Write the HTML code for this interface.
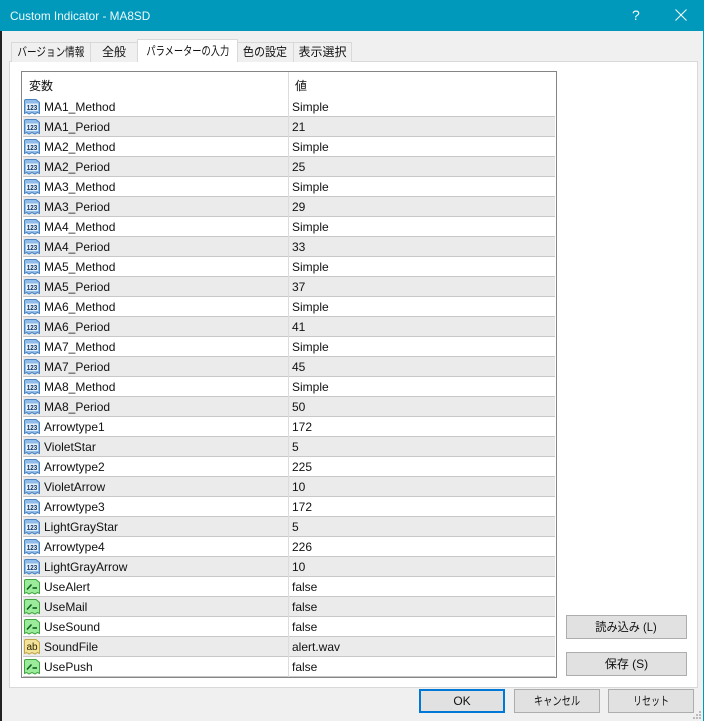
<!DOCTYPE html>
<html><head><meta charset="utf-8"><style>
*{box-sizing:border-box}
html,body{margin:0;padding:0;width:704px;height:721px;overflow:hidden;background:#222}
body{font-family:"Liberation Sans","Noto Sans CJK JP",sans-serif;font-size:12px;color:#111;position:relative}
.a{position:absolute}
#win{left:2px;top:0;width:702px;height:721px;background:#f0f0f0;border-right:1px solid #0099bc}
#title{left:0;top:0;width:704px;height:31px;background:#0099bc;color:#eef9fb;font-size:11.8px;line-height:32px;padding-left:10px}
.tab{position:absolute;top:42px;height:20px;background:#f0f0f0;border:1px solid #d9d9d9;border-bottom:0;text-align:center;line-height:19px;white-space:nowrap}
.k{display:inline-block;margin:0 -20px}
#panel{left:9px;top:61px;width:689px;height:627px;background:#fff;border:1px solid #d9d9d9}
#act{top:39px;height:23px;background:#fff;line-height:22px;z-index:2}
#list{left:21px;top:71px;width:536px;height:607px;background:#fff;border:1px solid #858585;z-index:3;overflow:hidden}
.h{position:absolute;top:7px;line-height:14px}
#vs{position:absolute;left:266px;top:0;width:1px;height:606px;background:#dcdcdc}
.r{position:absolute;left:1px;width:532px;height:20px;border-bottom:1px solid #c8c8c8;line-height:19px;background:#fff}
.r.g{background:#ebebeb}
.r svg{position:absolute;left:0;top:1px;width:18px;height:17px}
.r b{position:absolute;left:21px;top:1px;font-weight:normal;white-space:nowrap}
.r i{position:absolute;left:269px;top:1px;font-style:normal;white-space:nowrap}
.btn{position:absolute;height:24px;background:#e1e1e1;border:1px solid #adadad;text-align:center;line-height:22px;white-space:nowrap;z-index:3}
</style></head><body>
<svg width="0" height="0" style="position:absolute"><defs>
<symbol id="n" viewBox="0 0 18 17"><path d="M1.500 3Q1.500 1.500 3 1.500H13L16.500 4.500V15.500L14.500 14.500L12 16L9 14.500L6 16L3.500 14.500L1.500 15.500Z" fill="#8fbce8" stroke="#4a82bd"/><rect x="3" y="5.500" width="12" height="7.500" fill="#e3eef9"/><text x="9" y="11.800" font-size="7" font-weight="bold" text-anchor="middle" fill="#123a66" font-family="Liberation Sans" textLength="10.500" lengthAdjust="spacingAndGlyphs">123</text></symbol>
<symbol id="b" viewBox="0 0 18 17"><path d="M1.500 3Q1.500 1.500 3 1.500H13L16.500 4.500V15.500L14.500 14.500L12 16L9 14.500L6 16L3.500 14.500L1.500 15.500Z" fill="#9ceb9c" stroke="#3fa33f"/><path d="M4 11.500L8.500 6.500M9.500 10H14" stroke="#0a5a1a" stroke-width="1.500" fill="none"/></symbol>
<symbol id="s" viewBox="0 0 18 17"><path d="M1.500 3Q1.500 1.500 3 1.500H13L16.500 4.500V15.500L14.500 14.500L12 16L9 14.500L6 16L3.500 14.500L1.500 15.500Z" fill="#f3e29a" stroke="#c0a545"/><text x="9" y="12" font-size="10" text-anchor="middle" fill="#2e2600" font-family="Liberation Sans">ab</text></symbol>
</defs></svg>
<div class="a" id="win"></div>
<div class="a" id="title">Custom Indicator - MA8SD</div>
<div class="a" style="left:632px;top:6px;color:#fff;font-size:14px;line-height:18px">?</div>
<svg class="a" style="left:675px;top:9px" width="12" height="12"><path d="M.5 .5L11.500 11.500M11.500 .5L.5 11.500" stroke="#fff" fill="none"/></svg>
<div class="a" id="panel"></div>
<div class="tab" style="left:11px;width:80px"><span class="k" style="transform:scaleX(.8)">バージョン情報</span></div>
<div class="tab" style="left:90px;width:48px">全般</div>
<div class="tab" id="act" style="left:137px;width:101px"><span class="k" style="transform:scaleX(.77)">パラメーターの入力</span></div>
<div class="tab" style="left:237px;width:57px"><span class="k" style="transform:scaleX(.92)">色の設定</span></div>
<div class="tab" style="left:293px;width:59px">表示選択</div>
<div class="a" id="list">
<div class="h" style="left:7px">変数</div><div class="h" style="left:273px">値</div>
<div class="r" style="top:25px"><svg><use href="#n"/></svg><b>MA1_Method</b><i>Simple</i></div>
<div class="r g" style="top:45px"><svg><use href="#n"/></svg><b>MA1_Period</b><i>21</i></div>
<div class="r" style="top:65px"><svg><use href="#n"/></svg><b>MA2_Method</b><i>Simple</i></div>
<div class="r g" style="top:85px"><svg><use href="#n"/></svg><b>MA2_Period</b><i>25</i></div>
<div class="r" style="top:105px"><svg><use href="#n"/></svg><b>MA3_Method</b><i>Simple</i></div>
<div class="r g" style="top:125px"><svg><use href="#n"/></svg><b>MA3_Period</b><i>29</i></div>
<div class="r" style="top:145px"><svg><use href="#n"/></svg><b>MA4_Method</b><i>Simple</i></div>
<div class="r g" style="top:165px"><svg><use href="#n"/></svg><b>MA4_Period</b><i>33</i></div>
<div class="r" style="top:185px"><svg><use href="#n"/></svg><b>MA5_Method</b><i>Simple</i></div>
<div class="r g" style="top:205px"><svg><use href="#n"/></svg><b>MA5_Period</b><i>37</i></div>
<div class="r" style="top:225px"><svg><use href="#n"/></svg><b>MA6_Method</b><i>Simple</i></div>
<div class="r g" style="top:245px"><svg><use href="#n"/></svg><b>MA6_Period</b><i>41</i></div>
<div class="r" style="top:265px"><svg><use href="#n"/></svg><b>MA7_Method</b><i>Simple</i></div>
<div class="r g" style="top:285px"><svg><use href="#n"/></svg><b>MA7_Period</b><i>45</i></div>
<div class="r" style="top:305px"><svg><use href="#n"/></svg><b>MA8_Method</b><i>Simple</i></div>
<div class="r g" style="top:325px"><svg><use href="#n"/></svg><b>MA8_Period</b><i>50</i></div>
<div class="r" style="top:345px"><svg><use href="#n"/></svg><b>Arrowtype1</b><i>172</i></div>
<div class="r g" style="top:365px"><svg><use href="#n"/></svg><b>VioletStar</b><i>5</i></div>
<div class="r" style="top:385px"><svg><use href="#n"/></svg><b>Arrowtype2</b><i>225</i></div>
<div class="r g" style="top:405px"><svg><use href="#n"/></svg><b>VioletArrow</b><i>10</i></div>
<div class="r" style="top:425px"><svg><use href="#n"/></svg><b>Arrowtype3</b><i>172</i></div>
<div class="r g" style="top:445px"><svg><use href="#n"/></svg><b>LightGrayStar</b><i>5</i></div>
<div class="r" style="top:465px"><svg><use href="#n"/></svg><b>Arrowtype4</b><i>226</i></div>
<div class="r g" style="top:485px"><svg><use href="#n"/></svg><b>LightGrayArrow</b><i>10</i></div>
<div class="r" style="top:505px"><svg><use href="#b"/></svg><b>UseAlert</b><i>false</i></div>
<div class="r g" style="top:525px"><svg><use href="#b"/></svg><b>UseMail</b><i>false</i></div>
<div class="r" style="top:545px"><svg><use href="#b"/></svg><b>UseSound</b><i>false</i></div>
<div class="r g" style="top:565px"><svg><use href="#s"/></svg><b>SoundFile</b><i>alert.wav</i></div>
<div class="r" style="top:585px"><svg><use href="#b"/></svg><b>UsePush</b><i>false</i></div>
<div id="vs"></div>
</div>
<div class="btn" style="left:566px;top:615px;width:121px"><span class="k" style="transform:scaleX(.93)">読み込み (L)</span></div>
<div class="btn" style="left:566px;top:652px;width:121px">保存 (S)</div>
<div class="btn" style="left:419px;top:689px;width:86px;border:2px solid #0078d7;line-height:20px">OK</div>
<div class="btn" style="left:514px;top:689px;width:86px"><span class="k" style="transform:scaleX(.77)">キャンセル</span></div>
<div class="btn" style="left:608px;top:689px;width:86px"><span class="k" style="transform:scaleX(.75)">リセット</span></div>
<svg class="a" style="left:693px;top:711px" width="9" height="9"><path d="M6 0h2v2H6zM3 3h2v2H3zM6 3h2v2H6zM0 6h2v2H0zM3 6h2v2H3zM6 6h2v2H6z" fill="#bbb"/></svg>
</body></html>
